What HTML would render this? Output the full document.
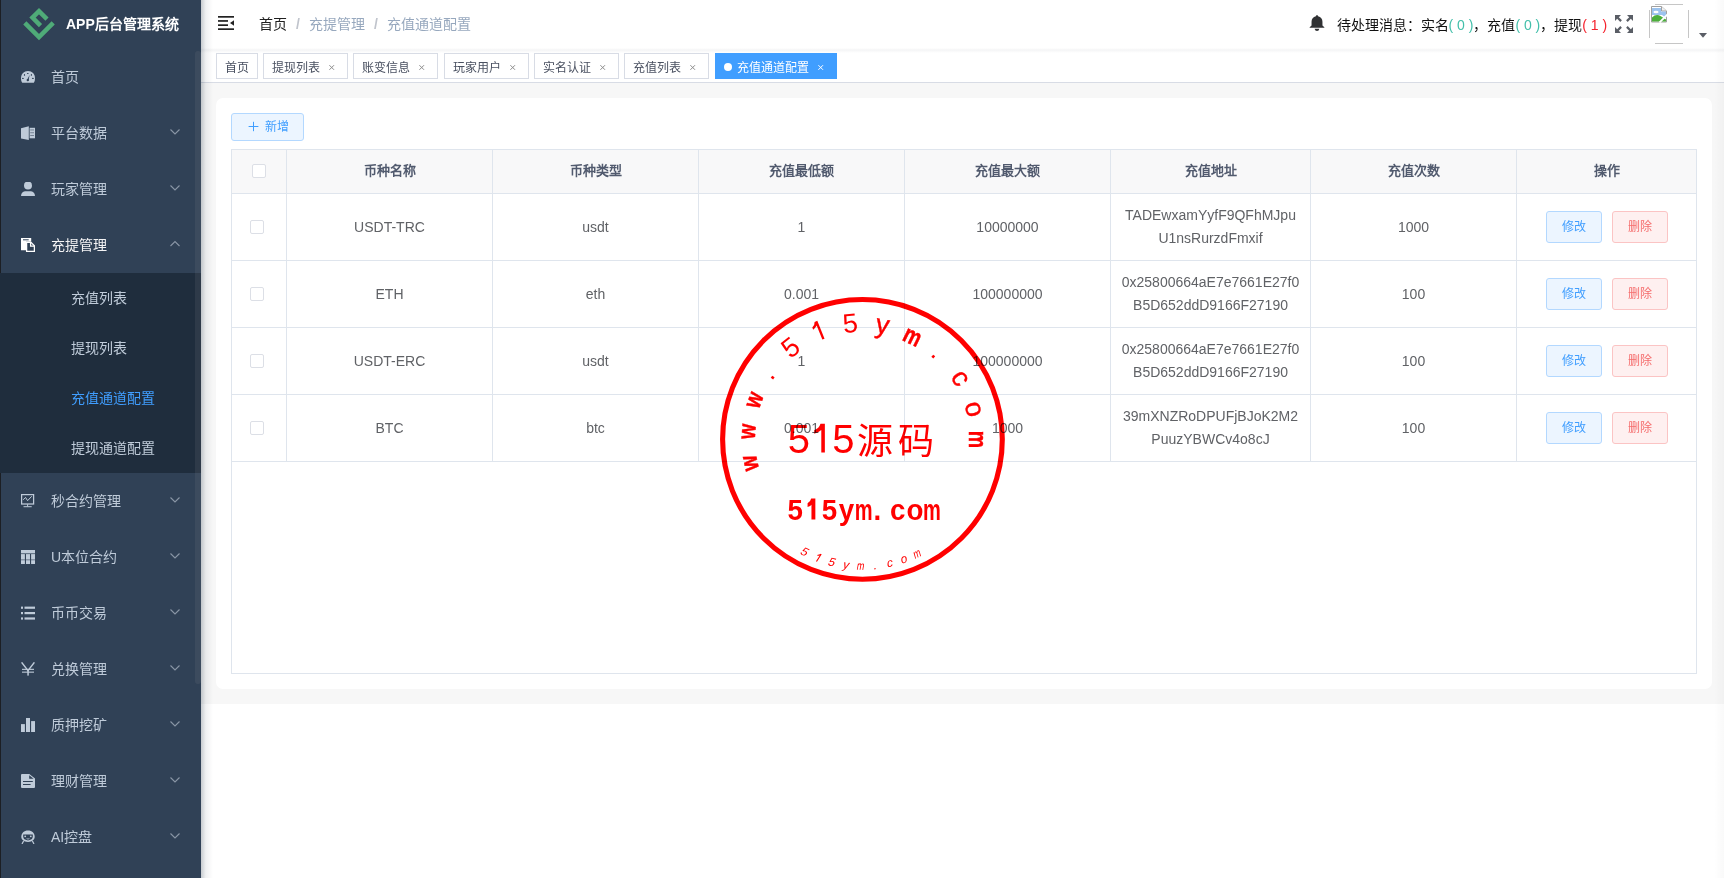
<!DOCTYPE html>
<html lang="zh-CN"><head><meta charset="utf-8"><title>充值通道配置</title>
<style>
*{margin:0;padding:0;box-sizing:border-box}
html,body{width:1724px;height:878px;overflow:hidden;background:#fff;font-family:"Liberation Sans",sans-serif}
.abs{position:absolute}
.t{position:absolute;white-space:nowrap}
#side{position:absolute;left:0;top:0;width:201px;height:878px;background:#304156;z-index:5}
#side .edge{position:absolute;left:0;top:0;width:1px;height:878px;background:#1c1f24}
.mt{position:absolute;left:51px;font-size:14px;line-height:20px;color:#bfcbd9;white-space:nowrap}
.st{position:absolute;left:71px;font-size:14px;line-height:20px;color:#bfcbd9;white-space:nowrap}
.subbg{position:absolute;left:0;top:273px;width:201px;height:200px;background:#1f2d3d}
#scroll{position:absolute;left:195px;top:51px;width:6px;height:633px;background:rgba(144,147,153,.13);border-radius:3px}
#shadow{position:absolute;left:201px;top:0;width:12px;height:878px;background:linear-gradient(to right,rgba(0,21,41,.22),rgba(0,21,41,.06) 40%,rgba(0,21,41,0));z-index:4}
#header{position:absolute;left:201px;top:0;width:1523px;height:50px;background:#fff;z-index:3}
#hsh{position:absolute;left:201px;top:48px;width:1523px;height:5px;background:linear-gradient(rgba(0,21,41,0) 0,rgba(0,21,41,.045) 40%,rgba(0,21,41,.0) 100%);z-index:3}
.bc{position:absolute;top:13.8px;font-size:14px;line-height:20px;white-space:nowrap}
#tags{position:absolute;left:201px;top:50px;width:1523px;height:33px;background:#fff;border-bottom:1px solid #d8dce5;z-index:2}
.tag{position:absolute;top:3px;height:26px;border:1px solid #d8dce5;background:#fff;color:#495060;font-size:12px;line-height:24px;white-space:nowrap}
.tag span{position:absolute;left:8px;top:1.6px}
.tag svg{position:absolute}
#main{position:absolute;left:201px;top:83px;width:1523px;height:621px;background:#f7f7f7}
#card{position:absolute;left:216px;top:98px;width:1496px;height:590.5px;background:#fff;border-radius:7px}
.btn{position:absolute;border-radius:3px;font-size:12px;white-space:nowrap}
.hl{position:absolute;background:#dfe5ed}
.th{position:absolute;top:149px;height:44px;font-size:13px;font-weight:bold;color:#515a6e;line-height:20px;text-align:center}
.td{position:absolute;font-size:14px;color:#606266;line-height:23px;text-align:center;white-space:nowrap}
.cb{position:absolute;width:14px;height:14px;border:1px solid #dcdfe6;border-radius:2px;background:#fff}
</style></head><body>
<div id="side"><div class="edge"></div>
<svg class="abs" style="left:0;top:0" width="70" height="50" viewBox="0 0 70 50"><path d="M24.8 22.9 L39 37.1 L53.2 22.9" fill="none" stroke="#4fab78" stroke-width="4.5"/><path d="M40.5 25.6 L32.5 17.6 L39 11.1 L47 19.1" fill="none" stroke="#4fab78" stroke-width="4.5"/></svg>
<div class="t" style="left:66px;top:14px;font-size:14px;font-weight:bold;color:#fff;line-height:20px">APP后台管理系统</div>
<div class="subbg"></div>
<svg class="abs" style="left:21px;top:71.1px" width="14" height="14" viewBox="0 0 14 14"><path d="M7 0 C3 0 0 3 0 7.2 Q0 10 1.2 11.8 H12.8 Q14 10 14 7.2 C14 3 11 0 7 0Z" fill="#bfcbd9"/><ellipse cx="6.8" cy="2.5" rx="0.9" ry="0.6" fill="#304156"/><ellipse cx="3.5" cy="3.9" rx="0.6" ry="0.9" fill="#304156"/><ellipse cx="10.4" cy="3.9" rx="0.6" ry="0.9" fill="#304156"/><ellipse cx="1.9" cy="7.4" rx="0.9" ry="0.6" fill="#304156"/><ellipse cx="11.9" cy="7.4" rx="0.9" ry="0.6" fill="#304156"/><path d="M6.1 8.8 L8.6 4 L7.6 9.2Z" fill="#304156"/><circle cx="6.8" cy="9.1" r="1.2" fill="#304156"/></svg>
<div class="mt" style="top:67.3px;color:#bfcbd9">首页</div>
<svg class="abs" style="left:21px;top:125.85px" width="14" height="14" viewBox="0 0 14 14"><path d="M0 2.2 L7.8 0.3 V14 L0 12.6Z" fill="#bfcbd9"/><rect x="8.6" y="1.8" width="5.4" height="10.5" fill="#bfcbd9"/><rect x="9.2" y="3.5" width="3.8" height="0.9" fill="#6d7a8c"/><rect x="9.2" y="6.3" width="3.8" height="0.9" fill="#6d7a8c"/><rect x="9.2" y="9.1" width="3.8" height="0.9" fill="#6d7a8c"/></svg>
<div class="mt" style="top:123.3px;color:#bfcbd9">平台数据</div>
<svg class="abs" style="left:169px;top:128px" width="12" height="8" viewBox="0 0 12 8"><path d="M1.5 1.5 L6 6 L10.5 1.5" fill="none" stroke="#8a96a6" stroke-width="1.1"/></svg>
<svg class="abs" style="left:21px;top:181.85px" width="14" height="14" viewBox="0 0 14 14"><circle cx="7" cy="3.5" r="4" fill="#bfcbd9"/><path d="M0 14 Q0.3 9.8 4 9.3 H10 Q13.7 9.8 14 14Z" fill="#bfcbd9"/></svg>
<div class="mt" style="top:179.3px;color:#bfcbd9">玩家管理</div>
<svg class="abs" style="left:169px;top:184px" width="12" height="8" viewBox="0 0 12 8"><path d="M1.5 1.5 L6 6 L10.5 1.5" fill="none" stroke="#8a96a6" stroke-width="1.1"/></svg>
<svg class="abs" style="left:21px;top:237.85px" width="14" height="14" viewBox="0 0 14 14"><path d="M0 0 H10.2 V3.8 H5 V12.2 H0Z" fill="#ffffff"/><rect x="2" y="1.3" width="5.7" height="1" fill="#304156"/><path d="M5.6 4.4 H10 L13.4 7.8 V13.4 H5.6Z" fill="none" stroke="#ffffff" stroke-width="1.3"/><path d="M9.6 4.4 V8.2 H13.4" fill="none" stroke="#ffffff" stroke-width="1.3"/></svg>
<div class="mt" style="top:235.3px;color:#f4f4f5">充提管理</div>
<svg class="abs" style="left:169px;top:239.5px" width="12" height="8" viewBox="0 0 12 8"><path d="M1.5 6 L6 1.5 L10.5 6" fill="none" stroke="#8a96a6" stroke-width="1.1"/></svg>
<div class="st" style="top:288.3px;">充值列表</div>
<div class="st" style="top:338.3px;">提现列表</div>
<div class="st" style="top:388.3px;color:#409eff">充值通道配置</div>
<div class="st" style="top:438.3px;">提现通道配置</div>
<svg class="abs" style="left:21px;top:493.85px" width="14" height="14" viewBox="0 0 14 14"><rect x="0.6" y="0.6" width="12" height="9.4" fill="none" stroke="#bfcbd9" stroke-width="1.25"/><path d="M2.2 5.8 L4.5 3.4 L6.6 6.7 L10.7 2.3" fill="none" stroke="#bfcbd9" stroke-width="1"/><rect x="6.1" y="10.2" width="1" height="2.2" fill="#bfcbd9"/><rect x="2.5" y="12.2" width="8.2" height="1" fill="#bfcbd9"/></svg>
<div class="mt" style="top:491.3px">秒合约管理</div>
<svg class="abs" style="left:169px;top:496px" width="12" height="8" viewBox="0 0 12 8"><path d="M1.5 1.5 L6 6 L10.5 1.5" fill="none" stroke="#8a96a6" stroke-width="1.1"/></svg>
<svg class="abs" style="left:21px;top:549.85px" width="14" height="14" viewBox="0 0 14 14"><rect x="0" y="0" width="14" height="3.4" fill="#bfcbd9"/><rect x="0" y="4.1" width="3.9" height="5.5" fill="#bfcbd9"/><rect x="5" y="4.1" width="4" height="5.5" fill="#bfcbd9"/><rect x="10.1" y="4.1" width="3.9" height="5.5" fill="#bfcbd9"/><rect x="0" y="10.2" width="3.9" height="3.8" fill="#bfcbd9"/><rect x="5" y="10.2" width="4" height="3.8" fill="#bfcbd9"/><rect x="10.1" y="10.2" width="3.9" height="3.8" fill="#bfcbd9"/></svg>
<div class="mt" style="top:547.3px">U本位合约</div>
<svg class="abs" style="left:169px;top:552px" width="12" height="8" viewBox="0 0 12 8"><path d="M1.5 1.5 L6 6 L10.5 1.5" fill="none" stroke="#8a96a6" stroke-width="1.1"/></svg>
<svg class="abs" style="left:21px;top:605.85px" width="14" height="14" viewBox="0 0 14 14"><rect x="0" y="0.6" width="2" height="2.2" fill="#bfcbd9"/><rect x="3.5" y="0.6" width="10.5" height="2.2" fill="#bfcbd9"/><rect x="0" y="6" width="2" height="2.2" fill="#bfcbd9"/><rect x="3.5" y="6" width="10.5" height="2.2" fill="#bfcbd9"/><rect x="0" y="11.4" width="2" height="2.2" fill="#bfcbd9"/><rect x="3.5" y="11.4" width="10.5" height="2.2" fill="#bfcbd9"/></svg>
<div class="mt" style="top:603.3px">币币交易</div>
<svg class="abs" style="left:169px;top:608px" width="12" height="8" viewBox="0 0 12 8"><path d="M1.5 1.5 L6 6 L10.5 1.5" fill="none" stroke="#8a96a6" stroke-width="1.1"/></svg>
<svg class="abs" style="left:21px;top:661.85px" width="14" height="14" viewBox="0 0 14 14"><path d="M0.6 0.4 L7 8.6 L13.4 0.4" fill="none" stroke="#bfcbd9" stroke-width="1.5"/><rect x="1" y="6.8" width="12" height="1.1" fill="#bfcbd9"/><rect x="1" y="9.6" width="12" height="1.1" fill="#bfcbd9"/><rect x="6.3" y="8" width="1.5" height="5.6" fill="#bfcbd9"/></svg>
<div class="mt" style="top:659.3px">兑换管理</div>
<svg class="abs" style="left:169px;top:664px" width="12" height="8" viewBox="0 0 12 8"><path d="M1.5 1.5 L6 6 L10.5 1.5" fill="none" stroke="#8a96a6" stroke-width="1.1"/></svg>
<svg class="abs" style="left:21px;top:717.85px" width="14" height="14" viewBox="0 0 14 14"><rect x="0" y="6.1" width="3.9" height="7.9" fill="#bfcbd9"/><rect x="5" y="0" width="4" height="14" fill="#bfcbd9"/><rect x="10.1" y="3.1" width="3.9" height="10.9" fill="#bfcbd9"/></svg>
<div class="mt" style="top:715.3px">质押挖矿</div>
<svg class="abs" style="left:169px;top:720px" width="12" height="8" viewBox="0 0 12 8"><path d="M1.5 1.5 L6 6 L10.5 1.5" fill="none" stroke="#8a96a6" stroke-width="1.1"/></svg>
<svg class="abs" style="left:21px;top:773.85px" width="14" height="14" viewBox="0 0 14 14"><path d="M1 0 H8.3 L14 4.4 V13 Q14 14 13 14 H1 Q0 14 0 13 V1 Q0 0 1 0Z" fill="#bfcbd9"/><path d="M8.2 1.2 V4.8 H12.6Z" fill="#304156"/><rect x="2" y="7" width="9.8" height="1" fill="#304156"/><rect x="2" y="10" width="7.6" height="1" fill="#304156"/></svg>
<div class="mt" style="top:771.3px">理财管理</div>
<svg class="abs" style="left:169px;top:776px" width="12" height="8" viewBox="0 0 12 8"><path d="M1.5 1.5 L6 6 L10.5 1.5" fill="none" stroke="#8a96a6" stroke-width="1.1"/></svg>
<svg class="abs" style="left:21px;top:829.85px" width="14" height="14" viewBox="0 0 14 14"><path d="M7 0.5 C3 0.5 0.3 3.2 0.3 6.8 C0.3 9.6 2.6 11.9 7 11.9 C11.4 11.9 13.7 9.6 13.7 6.8 C13.7 3.2 11 0.5 7 0.5Z" fill="#bfcbd9"/><path d="M2.2 4.5 H11.8 Q12.2 8.6 10 9.6 Q7 11.2 4 9.6 Q1.8 8.6 2.2 4.5Z" fill="#304156"/><circle cx="4.2" cy="6.3" r="0.9" fill="#bfcbd9"/><circle cx="9.8" cy="6.3" r="0.9" fill="#bfcbd9"/><path d="M5.6 8.6 Q7 9.6 8.4 8.6" fill="none" stroke="#bfcbd9" stroke-width="0.8"/><path d="M2.6 11 L1 14 M11.4 11 L13 14" stroke="#bfcbd9" stroke-width="1.2"/></svg>
<div class="mt" style="top:827.3px">AI控盘</div>
<svg class="abs" style="left:169px;top:832px" width="12" height="8" viewBox="0 0 12 8"><path d="M1.5 1.5 L6 6 L10.5 1.5" fill="none" stroke="#8a96a6" stroke-width="1.1"/></svg>
<div id="scroll"></div>
</div>
<div id="shadow"></div>
<div id="header"></div><div id="hsh"></div>
<svg class="abs" style="left:217px;top:15px;z-index:6" width="18" height="16" viewBox="0 0 18 16"><rect x="1" y="1" width="16" height="1.7" fill="#222"/><rect x="1" y="5.1" width="10" height="1.7" fill="#222"/><rect x="1" y="9.3" width="10" height="1.7" fill="#222"/><rect x="1" y="13.3" width="16" height="1.7" fill="#222"/><path d="M13 8 L17 5.2 V10.8Z" fill="#222"/></svg>
<div class="bc" style="left:259px;color:#1f1f1f;z-index:6">首页</div>
<div class="bc" style="left:296px;color:#c0c4cc;font-weight:bold;z-index:6">/</div>
<div class="bc" style="left:309px;color:#97a8be;z-index:6">充提管理</div>
<div class="bc" style="left:374px;color:#c0c4cc;font-weight:bold;z-index:6">/</div>
<div class="bc" style="left:387px;color:#97a8be;z-index:6">充值通道配置</div>
<svg class="abs" style="left:1309.45px;top:14px;z-index:6" width="16" height="18" viewBox="0 0 16 18"><path d="M8 1.2 C8.8 1.2 9.1 1.7 9.1 2.3 C11.9 2.9 13.45 5 13.45 7.8 V11.6 L15.35 13.2 V13.8 H0.65 V13.2 L2.55 11.6 V7.8 C2.55 5 4.1 2.9 6.9 2.3 C6.9 1.7 7.2 1.2 8 1.2Z" fill="#303133"/><path d="M5.6 14.7 H10.4 Q9.9 17 8 17 Q6.1 17 5.6 14.7Z" fill="#303133"/></svg>
<div class="t" style="left:1336.5px;top:15px;font-size:14px;line-height:20px;color:#111;z-index:6">待处理消息：实名<span style="color:#42bfaa">( 0 )</span>，充值<span style="color:#42bfaa">( 0 )</span>，提现<span style="color:#f5222d">( 1 )</span></div>
<svg class="abs" style="left:1615px;top:15px;z-index:6" width="18" height="18" viewBox="0 0 18 18" fill="#5a5e66"><path d="M0 0 H6 L3.8 2.2 L6.9 5.3 L5.3 6.9 L2.2 3.8 L0 6Z"/><path transform="translate(18,0) scale(-1,1)" d="M0 0 H6 L3.8 2.2 L6.9 5.3 L5.3 6.9 L2.2 3.8 L0 6Z"/><path transform="translate(0,18) scale(1,-1)" d="M0 0 H6 L3.8 2.2 L6.9 5.3 L5.3 6.9 L2.2 3.8 L0 6Z"/><path transform="translate(18,18) scale(-1,-1)" d="M0 0 H6 L3.8 2.2 L6.9 5.3 L5.3 6.9 L2.2 3.8 L0 6Z"/></svg>
<div class="abs" style="left:1655px;top:4px;width:28px;height:1px;background:#c6c6c6;z-index:6"></div><div class="abs" style="left:1655px;top:43px;width:28px;height:1px;background:#c6c6c6;z-index:6"></div><div class="abs" style="left:1649px;top:10px;width:1px;height:28px;background:#c6c6c6;z-index:6"></div><div class="abs" style="left:1688px;top:10px;width:1px;height:28px;background:#c6c6c6;z-index:6"></div><svg class="abs" style="left:1650px;top:5px;z-index:6" width="18" height="18" viewBox="0 0 18 18"><path d="M1.5 1.5 H11.5 L16.5 6 V17 H1.5Z" fill="#fff" stroke="#a0a0a0" stroke-width="1"/><path d="M11.5 1.5 V6 H16.5" fill="#f2f2f2" stroke="#a0a0a0" stroke-width="1"/><path d="M2 3 H11 V6.5 H16 V13 L12 10 H2Z" fill="#9cc3ee"/><ellipse cx="6" cy="7" rx="2.6" ry="1.2" fill="#fff"/><path d="M2 16.5 V12.5 Q6 8.5 10.5 11 L16 14.5 V16.5Z" fill="#4caf3c"/><path d="M9.5 17.5 L17.5 9.5" stroke="#fff" stroke-width="1.8"/></svg>
<svg class="abs" style="left:1699px;top:33px;z-index:6" width="8" height="5" viewBox="0 0 8 5"><path d="M0 0 H8 L4 4.8Z" fill="#5a5e66"/></svg>
<div id="tags">
<div class="tag" style="left:15px;width:42px"><span>首页</span></div>
<div class="tag" style="left:62px;width:85px"><span>提现列表</span><svg style="left:63px;top:9px" width="8" height="8" viewBox="0 0 8 8"><path d="M2.4 2.2 L7 6.8 M7 2.2 L2.4 6.8" stroke="#8c8c8c" stroke-width="1"/></svg></div>
<div class="tag" style="left:152px;width:85px"><span>账变信息</span><svg style="left:63px;top:9px" width="8" height="8" viewBox="0 0 8 8"><path d="M2.4 2.2 L7 6.8 M7 2.2 L2.4 6.8" stroke="#8c8c8c" stroke-width="1"/></svg></div>
<div class="tag" style="left:243px;width:85px"><span>玩家用户</span><svg style="left:63px;top:9px" width="8" height="8" viewBox="0 0 8 8"><path d="M2.4 2.2 L7 6.8 M7 2.2 L2.4 6.8" stroke="#8c8c8c" stroke-width="1"/></svg></div>
<div class="tag" style="left:333px;width:85px"><span>实名认证</span><svg style="left:63px;top:9px" width="8" height="8" viewBox="0 0 8 8"><path d="M2.4 2.2 L7 6.8 M7 2.2 L2.4 6.8" stroke="#8c8c8c" stroke-width="1"/></svg></div>
<div class="tag" style="left:423px;width:85px"><span>充值列表</span><svg style="left:63px;top:9px" width="8" height="8" viewBox="0 0 8 8"><path d="M2.4 2.2 L7 6.8 M7 2.2 L2.4 6.8" stroke="#8c8c8c" stroke-width="1"/></svg></div>
<div class="tag" style="left:514px;width:122px;background:#409eff;border-color:#409eff;color:#fff"><div class="abs" style="left:8px;top:9px;width:8px;height:8px;border-radius:50%;background:#fff"></div><span style="left:21px">充值通道配置</span><svg style="left:100px;top:9px" width="8" height="8" viewBox="0 0 8 8"><path d="M2.4 2.2 L7 6.8 M7 2.2 L2.4 6.8" stroke="#fff" stroke-width="1"/></svg></div>
</div>
<div id="main"></div><div id="card"></div>
<div class="btn" style="left:231px;top:113px;width:73px;height:28px;background:#ecf5ff;border:1px solid #b3d8ff;color:#409eff"><svg class="abs" style="left:16px;top:7px" width="11" height="11" viewBox="0 0 11 11"><path d="M5.5 0.8 V10.2 M0.6 5.5 H10.4" stroke="#409eff" stroke-width="1"/></svg><span class="abs" style="left:33px;top:5px;line-height:16px">新增</span></div>
<div class="abs" style="left:231px;top:149px;width:1466px;height:525px;background:#fff;border:1px solid #dfe5ed"></div>
<div class="abs" style="left:232px;top:150px;width:1464px;height:43px;background:#f8f8f9"></div>
<div class="hl" style="left:231px;top:193px;width:1466px;height:1px"></div>
<div class="hl" style="left:231px;top:260px;width:1466px;height:1px"></div>
<div class="hl" style="left:231px;top:327px;width:1466px;height:1px"></div>
<div class="hl" style="left:231px;top:394px;width:1466px;height:1px"></div>
<div class="hl" style="left:231px;top:461px;width:1466px;height:1px"></div>
<div class="hl" style="left:286px;top:149px;width:1px;height:313px"></div>
<div class="hl" style="left:492px;top:149px;width:1px;height:313px"></div>
<div class="hl" style="left:698px;top:149px;width:1px;height:313px"></div>
<div class="hl" style="left:904px;top:149px;width:1px;height:313px"></div>
<div class="hl" style="left:1110px;top:149px;width:1px;height:313px"></div>
<div class="hl" style="left:1310px;top:149px;width:1px;height:313px"></div>
<div class="hl" style="left:1516px;top:149px;width:1px;height:313px"></div>
<div class="th" style="left:287px;width:205px;padding-top:12px">币种名称</div>
<div class="th" style="left:493px;width:205px;padding-top:12px">币种类型</div>
<div class="th" style="left:699px;width:205px;padding-top:12px">充值最低额</div>
<div class="th" style="left:905px;width:205px;padding-top:12px">充值最大额</div>
<div class="th" style="left:1111px;width:199px;padding-top:12px">充值地址</div>
<div class="th" style="left:1311px;width:205px;padding-top:12px">充值次数</div>
<div class="th" style="left:1517px;width:179px;padding-top:12px">操作</div>
<div class="cb" style="left:252px;top:164px"></div>
<div class="cb" style="left:250px;top:220px"></div>
<div class="td" style="left:287px;width:205px;top:215.5px">USDT-TRC</div>
<div class="td" style="left:493px;width:205px;top:215.5px">usdt</div>
<div class="td" style="left:699px;width:205px;top:215.5px">1</div>
<div class="td" style="left:905px;width:205px;top:215.5px">10000000</div>
<div class="td" style="left:1111px;width:199px;top:204px">TADEwxamYyfF9QFhMJpu<br>U1nsRurzdFmxif</div>
<div class="td" style="left:1311px;width:205px;top:215.5px">1000</div>
<div class="btn" style="left:1546px;top:211px;width:56px;height:32px;background:#ecf5ff;border:1px solid #b3d8ff;color:#409eff"><span class="abs" style="left:15px;top:7px;line-height:16px">修改</span></div>
<div class="btn" style="left:1612px;top:211px;width:56px;height:32px;background:#fef0f0;border:1px solid #fbc4c4;color:#f56c6c"><span class="abs" style="left:15px;top:7px;line-height:16px">删除</span></div>
<div class="cb" style="left:250px;top:287px"></div>
<div class="td" style="left:287px;width:205px;top:282.5px">ETH</div>
<div class="td" style="left:493px;width:205px;top:282.5px">eth</div>
<div class="td" style="left:699px;width:205px;top:282.5px">0.001</div>
<div class="td" style="left:905px;width:205px;top:282.5px">100000000</div>
<div class="td" style="left:1111px;width:199px;top:271px">0x25800664aE7e7661E27f0<br>B5D652ddD9166F27190</div>
<div class="td" style="left:1311px;width:205px;top:282.5px">100</div>
<div class="btn" style="left:1546px;top:278px;width:56px;height:32px;background:#ecf5ff;border:1px solid #b3d8ff;color:#409eff"><span class="abs" style="left:15px;top:7px;line-height:16px">修改</span></div>
<div class="btn" style="left:1612px;top:278px;width:56px;height:32px;background:#fef0f0;border:1px solid #fbc4c4;color:#f56c6c"><span class="abs" style="left:15px;top:7px;line-height:16px">删除</span></div>
<div class="cb" style="left:250px;top:354px"></div>
<div class="td" style="left:287px;width:205px;top:349.5px">USDT-ERC</div>
<div class="td" style="left:493px;width:205px;top:349.5px">usdt</div>
<div class="td" style="left:699px;width:205px;top:349.5px">1</div>
<div class="td" style="left:905px;width:205px;top:349.5px">100000000</div>
<div class="td" style="left:1111px;width:199px;top:338px">0x25800664aE7e7661E27f0<br>B5D652ddD9166F27190</div>
<div class="td" style="left:1311px;width:205px;top:349.5px">100</div>
<div class="btn" style="left:1546px;top:345px;width:56px;height:32px;background:#ecf5ff;border:1px solid #b3d8ff;color:#409eff"><span class="abs" style="left:15px;top:7px;line-height:16px">修改</span></div>
<div class="btn" style="left:1612px;top:345px;width:56px;height:32px;background:#fef0f0;border:1px solid #fbc4c4;color:#f56c6c"><span class="abs" style="left:15px;top:7px;line-height:16px">删除</span></div>
<div class="cb" style="left:250px;top:421px"></div>
<div class="td" style="left:287px;width:205px;top:416.5px">BTC</div>
<div class="td" style="left:493px;width:205px;top:416.5px">btc</div>
<div class="td" style="left:699px;width:205px;top:416.5px">0.001</div>
<div class="td" style="left:905px;width:205px;top:416.5px">1000</div>
<div class="td" style="left:1111px;width:199px;top:405px">39mXNZRoDPUFjBJoK2M2<br>PuuzYBWCv4o8cJ</div>
<div class="td" style="left:1311px;width:205px;top:416.5px">100</div>
<div class="btn" style="left:1546px;top:412px;width:56px;height:32px;background:#ecf5ff;border:1px solid #b3d8ff;color:#409eff"><span class="abs" style="left:15px;top:7px;line-height:16px">修改</span></div>
<div class="btn" style="left:1612px;top:412px;width:56px;height:32px;background:#fef0f0;border:1px solid #fbc4c4;color:#f56c6c"><span class="abs" style="left:15px;top:7px;line-height:16px">删除</span></div>
<svg class="abs" style="left:0;top:0;z-index:8;mix-blend-mode:multiply" width="1724" height="878" viewBox="0 0 1724 878"><circle cx="862.45" cy="439.35" r="139.85" fill="none" stroke="#ff0000" stroke-width="5.1"/><text transform="translate(757.30,461.70) rotate(-102) scale(0.78,1)" text-anchor="middle" font-family="Liberation Sans" font-size="25" font-weight="bold" fill="#ff0000" stroke="#ff0000" stroke-width="0.5">w</text><text transform="translate(755.21,431.85) rotate(-86) scale(0.78,1)" text-anchor="middle" font-family="Liberation Sans" font-size="25" font-weight="bold" fill="#ff0000" stroke="#ff0000" stroke-width="0.5">w</text><text transform="translate(761.43,402.58) rotate(-70) scale(0.78,1)" text-anchor="middle" font-family="Liberation Sans" font-size="25" font-weight="bold" fill="#ff0000" stroke="#ff0000" stroke-width="0.5">w</text><text transform="translate(773.86,378.46) rotate(-55.5) scale(1.0,1)" text-anchor="middle" font-family="Liberation Sans" font-size="27" font-weight="normal" fill="#ff0000">.</text><text transform="translate(796.27,354.64) rotate(-38) scale(1.0,1)" text-anchor="middle" font-family="Liberation Sans" font-size="27" font-weight="normal" fill="#ff0000">5</text><path transform="translate(822.18,339.68) rotate(-22) scale(1.0,1)" d="M0.16 -19.33 H2.56 V0 H0.16 V-15.12 Q-1.62 -13.50 -4.59 -12.69 V-14.99 Q-1.35 -16.20 -0.38 -19.33Z" fill="#ff0000"/><text transform="translate(851.21,332.44) rotate(-6) scale(1.0,1)" text-anchor="middle" font-family="Liberation Sans" font-size="27" font-weight="normal" fill="#ff0000">5</text><text transform="translate(881.12,333.48) rotate(10) scale(1.0,1)" text-anchor="middle" font-family="Liberation Sans" font-size="27" font-weight="normal" fill="#ff0000" stroke="#ff0000" stroke-width="0.4">y</text><text transform="translate(909.14,343.63) rotate(26) scale(0.78,1)" text-anchor="middle" font-family="Liberation Sans" font-size="25" font-weight="bold" fill="#ff0000" stroke="#ff0000" stroke-width="0.5">m</text><text transform="translate(932.27,357.61) rotate(40.5) scale(1.0,1)" text-anchor="middle" font-family="Liberation Sans" font-size="27" font-weight="normal" fill="#ff0000">.</text><text transform="translate(953.62,382.38) rotate(58) scale(1.0,1)" text-anchor="middle" font-family="Liberation Sans" font-size="27" font-weight="normal" fill="#ff0000" stroke="#ff0000" stroke-width="0.4">c</text><text transform="translate(966.19,411.16) rotate(74.8) scale(1.0,1)" text-anchor="middle" font-family="Liberation Sans" font-size="27" font-weight="normal" fill="#ff0000" stroke="#ff0000" stroke-width="0.4">o</text><text transform="translate(968.95,439.35) rotate(90) scale(0.78,1)" text-anchor="middle" font-family="Liberation Sans" font-size="25" font-weight="bold" fill="#ff0000" stroke="#ff0000" stroke-width="0.5">m</text><text transform="translate(798.82,452.5)" text-anchor="middle" font-family="Liberation Sans" font-size="40" font-weight="normal" fill="#ff0000">5</text><path transform="translate(821.06,452.5)" d="M0.24 -28.64 H3.80 V0 H0.24 V-22.40 Q-2.40 -20.00 -6.80 -18.80 V-22.20 Q-2.00 -24.00 -0.56 -28.64Z" fill="#ff0000"/><text transform="translate(843.30,452.5)" text-anchor="middle" font-family="Liberation Sans" font-size="40" font-weight="normal" fill="#ff0000">5</text><text x="857" y="453.5" font-family="Liberation Sans" font-size="36" fill="#ff0000">源</text><text x="898" y="453.5" font-family="Liberation Sans" font-size="36" fill="#ff0000">码</text><text transform="translate(795.20,519.6) scale(0.94,1)" text-anchor="middle" font-family="Liberation Sans" font-size="29.5" font-weight="bold" fill="#ff0000">5</text><path transform="translate(812.30,519.6) scale(0.94,1)" d="M-0.89 -21.12 H3.25 V0 H-0.89 V-14.75 Q-1.77 -13.28 -5.02 -12.69 V-16.23 Q-2.07 -17.70 -1.18 -21.12Z" fill="#ff0000"/><text transform="translate(829.40,519.6) scale(0.94,1)" text-anchor="middle" font-family="Liberation Sans" font-size="29.5" font-weight="bold" fill="#ff0000">5</text><text transform="translate(846.50,519.6) scale(0.94,1)" text-anchor="middle" font-family="Liberation Sans" font-size="29.5" font-weight="bold" fill="#ff0000">y</text><text transform="translate(863.60,519.6) scale(0.68,1)" text-anchor="middle" font-family="Liberation Sans" font-size="29.5" font-weight="bold" fill="#ff0000">m</text><text transform="translate(877.40,519.6) scale(0.94,1)" text-anchor="middle" font-family="Liberation Sans" font-size="29.5" font-weight="bold" fill="#ff0000">.</text><text transform="translate(897.80,519.6) scale(0.94,1)" text-anchor="middle" font-family="Liberation Sans" font-size="29.5" font-weight="bold" fill="#ff0000">c</text><text transform="translate(914.90,519.6) scale(0.94,1)" text-anchor="middle" font-family="Liberation Sans" font-size="29.5" font-weight="bold" fill="#ff0000">o</text><text transform="translate(932.00,519.6) scale(0.68,1)" text-anchor="middle" font-family="Liberation Sans" font-size="29.5" font-weight="bold" fill="#ff0000">m</text><text transform="translate(802.19,555.10) rotate(27.50) scale(1.0,1) skewX(-12)" text-anchor="middle" font-family="Liberation Sans" font-size="12" font-weight="normal" fill="#ff0000">5</text><path transform="translate(815.90,561.26) rotate(20.90) scale(1.0,1) skewX(-12)" d="M0.07 -8.59 H1.14 V0 H0.07 V-6.72 Q-0.72 -6.00 -2.04 -5.64 V-6.66 Q-0.60 -7.20 -0.17 -8.59Z" fill="#ff0000"/><text transform="translate(830.22,565.81) rotate(14.30) scale(1.0,1) skewX(-12)" text-anchor="middle" font-family="Liberation Sans" font-size="12" font-weight="normal" fill="#ff0000">5</text><text transform="translate(844.96,568.67) rotate(7.70) scale(1.0,1) skewX(-12)" text-anchor="middle" font-family="Liberation Sans" font-size="12" font-weight="normal" fill="#ff0000">y</text><text transform="translate(859.94,569.83) rotate(1.10) scale(0.75,1) skewX(-12)" text-anchor="middle" font-family="Liberation Sans" font-size="12" font-weight="normal" fill="#ff0000">m</text><text transform="translate(874.96,569.25) rotate(-5.50) scale(1.0,1) skewX(-12)" text-anchor="middle" font-family="Liberation Sans" font-size="12" font-weight="normal" fill="#ff0000">.</text><text transform="translate(889.81,566.95) rotate(-12.10) scale(1.0,1) skewX(-12)" text-anchor="middle" font-family="Liberation Sans" font-size="12" font-weight="normal" fill="#ff0000">c</text><text transform="translate(904.29,562.96) rotate(-18.70) scale(1.0,1) skewX(-12)" text-anchor="middle" font-family="Liberation Sans" font-size="12" font-weight="normal" fill="#ff0000">o</text><text transform="translate(918.22,557.33) rotate(-25.30) scale(0.75,1) skewX(-12)" text-anchor="middle" font-family="Liberation Sans" font-size="12" font-weight="normal" fill="#ff0000">m</text></svg>
<div class="abs" style="left:1714px;top:0;width:10px;height:878px;background:linear-gradient(to right,rgba(0,0,0,0),rgba(0,0,0,.025));z-index:9"></div>
</body></html>
